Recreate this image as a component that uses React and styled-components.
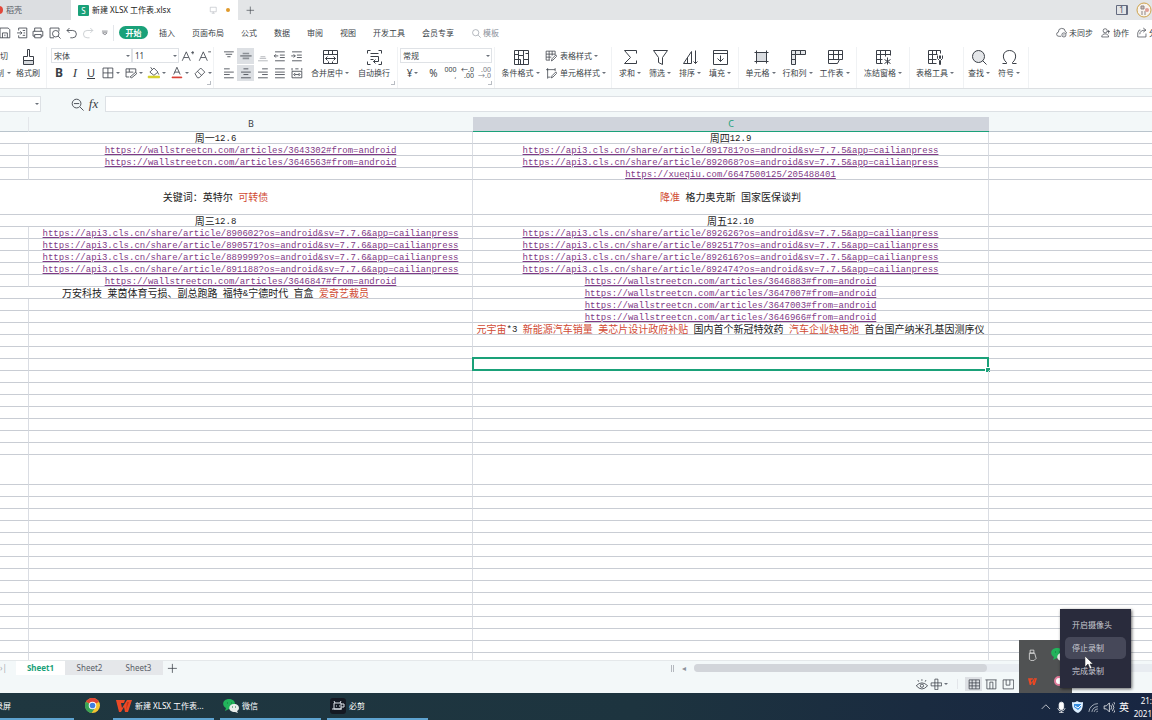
import React from "react";
import styled, { createGlobalStyle, css } from "styled-components";

const c = {
  green: "#1aa179",
  ink: "#3a3f47",
  soft: "#8a909a",
  pale: "#f3f8f9",
  line: "#c9cdd4",
  faint: "#e3e6ea",
  red: "#d04a33",
  link: "#7f3a86",
};

const Global = createGlobalStyle`
  * { box-sizing: border-box; }
  body {
    margin: 0;
    overflow: hidden;
    background: #fff;
    color: ${c.ink};
    font: 8px/12px "Noto Sans", "Noto Sans CJK SC", sans-serif;
  }
  button, input, select { font: inherit; color: inherit; }
  button { border: 0; padding: 0; background: none; white-space: nowrap; }
`;

/* ---------- icons ---------- */

const paths = {
  save: <path d="M2 2h10l2 2v10H2zM5 14V8h6v6M8 10v2" />,
  export: <><path d="M4 5V2h10v12H4v-3M2 8h6M6 6l2 2-2 2" /><path d="M9 5h3M10 8h2M9 11h3" /></>,
  print: <path d="M4 6V2h8v4M4 12H2V6h12v6h-2M4 10h8v4H4z" />,
  preview: <><path d="M13 6V2H2v12h5" /><circle cx="9" cy="9" r="4" /><path d="m12 12 3 3" /></>,
  undo: <path d="M5 2 2 5l3 3M2 5h7a4 4 0 0 1 0 9H6" />,
  redo: <path d="m11 2 3 3-3 3M14 5H7a4 4 0 0 0 0 9h3" />,
  more: <path d="M3 5h10M4 8l4 4 4-4z" />,
  search: <><circle cx="7" cy="7" r="5" /><path d="m11 11 4 4" /></>,
  cloud: <><path d="M7 13H4a3 3 0 0 1-1-6 5 5 0 0 1 10-1 3 3 0 0 1 2 3" /><circle cx="11" cy="11" r="3" /><path d="M10 11h2" /></>,
  person: <><circle cx="7" cy="5" r="3" /><path d="M2 14c0-6 10-6 10 0zM12 4v5M10 6h4" /></>,
  share: <path d="M6 4H4L2 8v6h12V9M5 10c0-4 3-6 8-6M10 1l4 3-4 3" />,
  brush: <><path d="M7 0h2v7h4v4H3V7h4z" /><path d="M3 11h10v4H3z" fill="#d5d8dc" /></>,
  fontUp: <path d="M1 14 6 3l5 11M3 10h6M12 4h4M14 2v4" />,
  fontDown: <path d="M1 14 6 3l5 11M3 10h6M12 3h4" />,
  borders: <path d="M2 2h12v12H2zM8 2v12M2 8h12" />,
  cellStyle: <path d="M2 3h12v4M2 3v10h4M2 7h9M6 3v4M7 13l7-6 1 2-6 5z" />,
  fill: <><path d="m3 7 5-5 5 5-5 4zM6 4 4 1M13 8l1 2" /><path d="M1 12h14v2H1z" fill="#d8d100" stroke="#cfc92a" /></>,
  fontColor: <><path d="M4 10 8 1l4 9M5 7h6" /><path d="M2 13h12v1H2z" fill="#d9362b" stroke="#d9362b" /></>,
  eraser: <path d="m2 9 7-7 5 5-7 7H5zM5 6l5 5" />,
  alignTop: <path d="M2 3h12M4 6h8M6 9h4" />,
  alignMid: <path d="M4 5h8M1 8h14M4 11h8" stroke="#8c9096" strokeWidth="2" />,
  alignBottom: <path d="M5 9h6M4 11h8M2 14h12" stroke="#a6aaaf" />,
  indentLeft: <path d="M2 3h12M8 7h6M8 10h6M2 14h12M6 8H1M3 6 1 8l2 2" />,
  indentRight: <path d="M2 3h12M8 7h6M8 10h6M2 14h12M1 8h5M4 6l2 2-2 2" />,
  left: <path d="M2 3h7M2 7h12M2 10h7M2 14h12" />,
  center: <path d="M5 3h6M2 7h12M5 10h6M2 14h12" />,
  right: <path d="M7 3h7M2 7h12M7 10h7M2 14h12" />,
  justify: <path d="M2 3h12M2 7h12M2 10h12M2 14h12" />,
  distribute: <path d="M2 2v3M14 2v3M6 3h4M2 6h12v8H2zM5 10h6M6 8l-2 2 2 2M10 8l2 2-2 2" />,
  merge: <><path d="M1 1h14v13H1zM1 5h14M6 1v4M10 1v4M6 12v2M10 12v2" /><path d="M3 9h10M5 7 3 9l2 2M11 7l2 2-2 2" /></>,
  wrap: <path d="M4 1H1v3M12 1h3v3M1 12v3h3M15 12v3h-3M4 4h8M4 7h8v5H7M4 10h3M9 10l-2 2 2 2" />,
  condition: <path d="M1 1h14v14H1zM5 1v14M1 5h4M1 10h4M5 6h5V1M10 6v4h5M5 10h2v5M10 10v5M12 4h3" />,
  tableStyle: <path d="M13 6V1H1v12h5M1 5h12M1 9h7M5 1v12M9 1v6M8 14l1-3 5-5 1 2-5 5z" />,
  cellFormat: <path d="M3 1v3M1 3h12M3 3v10h4M13 1v4M3 13v2M8 14l1-3 5-5 1 2-5 5z" />,
  sum: <path d="M14 4V1H2l6 7-6 6h12v-3" />,
  filter: <path d="M1 1h14l-5 7v7l-4-2V8z" />,
  sort: <path d="M1 14 9 2v12zM5 14V8M13 1v13M11 12l2 2 2-2" />,
  fillDown: <path d="M1 1h14v14H1zM1 4h14M8 6v6M5 9l3 3 3-3" />,
  cell: <><path d="M3 3h10v9H3z" fill="#d9dce0" stroke="none" /><path d="M3 1v13M13 1v13M1 3h14M1 12h14" /></>,
  rowcol: <><path d="M1 1h14v4H5v10H1z" fill="#e4e6e9" /><path d="M1 5h4V1M10 1v4M1 10h4" /></>,
  sheet: <path d="M1 1h14v9h-3l-2 4H1V1M1 5h14M6 1v9M11 1v9M1 10h11" />,
  freeze: <path d="M15 6V1H1v13h6M1 5h14M1 10h6M5 1v13M10 1v6M12 8v7M9 10l6 4M15 10l-6 4" />,
  tools: <path d="M13 4V1H1v13h8M1 5h9M1 10h8M5 1v13M9 1v4M10 6v3l2 2v4h1v-4l2-2V6M12 6v3h1V6" />,
  find: <><circle cx="7" cy="7" r="6" fill="#e4e6e9" /><path d="m11 11 4 4" /></>,
  omega: <path d="M1 14h4v-1C0 9 1 1 8 1s8 8 3 12v1h4" />,
  zoomOut: <><circle cx="7" cy="7" r="5" /><path d="m11 11 4 4M4 7h6" /></>,
  monitor: <path d="M2 2h12v9H2zM5 14h6M8 11v3" stroke="#a7abb2" />,
  eye: <><path d="M1 9q7-7 14 0-7 8-14 0zM8 1v2M3 2l1 2M13 2l-1 2" /><circle cx="8" cy="9" r="2" /></>,
  target: <path d="M6 1h4v14H6zM1 6h14v4H1z" />,
  grid: <path d="M1 2h14v12H1zM1 6h14M1 10h14M5 2v12M10 2v12" />,
  page: <path d="M2 2h12v12H2zM2 2H0M14 2h1M6 5v9M6 5h4v9" />,
  split: <path d="M1 2h14v12H1zM5 2v7M10 2v7M5 9h5" />,
  plus: <path d="M8 2v12M2 8h12" />,
  usb: <path d="M5 1h5v4H5zM4 5h7l2 7-3 3H6l-2-2z" stroke="#eee" />,
  up: <path d="m2 11 6-6 6 6" />,
  mic: <><rect x="5" y="1" width="6" height="10" rx="3" fill="#fff" /><path d="M3 9q1 4 5 4t5-4M8 13v2M5 15h6" /></>,
  wifi: <path d="M2 14A12 12 0 0 1 14 3M6 14a8 8 0 0 1 8-7M9 14a5 5 0 0 1 5-4M12 14l2-1" />,
  volume: <path d="M1 6h3l4-4v12l-4-4H1zM10 5q2 3 0 6M12 3q4 5 0 10M14 1q5 7 0 14" />,
};

const Svg = styled.svg`
  display: block;
  flex: none;
  fill: none;
  stroke: ${(p) => p.$color || "currentColor"};
  stroke-width: 1;
`;

/* The half-unit origin keeps whole-number strokes on the pixel grid. */
const Icon = ({ name, size = 12, color }) => (
  <Svg width={size} height={size} viewBox="-0.5 -0.5 16 16" $color={color} aria-hidden="true">
    {paths[name]}
  </Svg>
);

const CaretShape = styled.svg`
  display: block;
  flex: none;
  fill: #6b717a;
`;
const Caret = () => (
  <CaretShape width="4" height="2" viewBox="0 0 4 2" aria-hidden="true">
    <path d="M0 0h4L2 2z" />
  </CaretShape>
);

/* ---------- shell ---------- */

const Shell = styled.div`
  position: relative;
  display: flex;
  flex-direction: column;
  height: 100vh;
  overflow: hidden;
`;

const TitleBar = styled.header`
  display: flex;
  align-items: center;
  flex: none;
  height: 20px;
  background: #e3e5e7;
`;
const DocTab = styled.button`
  display: flex;
  align-items: center;
  gap: 3px;
  height: 20px;
  width: ${(p) => p.$width}px;
  padding: ${(p) => (p.$active ? "0 8px 0 7px" : "0")};
  background: ${(p) => (p.$active ? "#fff" : "#dcdee1")};
  color: ${(p) => (p.$active ? "#222" : "#555a63")};
  overflow: hidden;
`;
const TabTitle = styled.span`
  flex: 1;
  text-align: left;
`;
const HalfLogo = styled.span`
  width: 8px;
  height: 8px;
  margin-left: -5px;
  border-radius: 4px;
  background: #e2473a;
`;
const SheetLogo = styled.span`
  width: 11px;
  height: 11px;
  border-radius: 1px;
  background: ${c.green};
  color: #fff;
  line-height: 11px;
`;
const UnsavedDot = styled.span`
  width: 4px;
  height: 4px;
  margin-left: 6px;
  border-radius: 2px;
  background: #e09a2c;
`;
const IconButton = styled.button`
  display: flex;
  align-items: center;
  justify-content: center;
  gap: 2px;
  width: ${(p) => p.$w || 17}px;
  height: ${(p) => p.$h || 16}px;
  color: ${(p) => p.$color || c.ink};
  background: ${(p) => (p.$on ? "#dde0e4" : "none")};
  ${(p) => p.$large && css`font-size: 10px;`}
  ${(p) => p.$bold && css`font-size: 12px; font-weight: 700;`}
  ${(p) => p.$italic && css`font: italic 13px/16px "Liberation Serif", serif;`}
  ${(p) => p.$underline && css`font-size: 11px; text-decoration: underline;`}
`;
const Spacer = styled.div`
  flex: 1;
`;
const Badge = styled.span`
  width: 12px;
  height: 10px;
  margin-right: 8px;
  border: 1px solid #646b80;
  border-right-width: 2px;
  border-radius: 1px;
  color: #4b5266;
  line-height: 8px;
  text-align: center;
`;

const MenuBar = styled.nav`
  display: flex;
  align-items: center;
  flex: none;
  height: 25px;
  overflow: hidden;
`;
const QuickBar = styled.div`
  display: flex;
  margin-left: -4px;
  width: 118px;
  border-right: 1px solid ${c.faint};
`;
const MenuList = styled.div`
  display: flex;
  align-items: center;
  gap: 17px;
  margin-left: 5px;
`;
const MenuItem = styled.button`
  ${(p) =>
    p.$active &&
    css`
      height: 13px;
      width: 29px;
      margin-right: -6px;
      border-radius: 7px;
      background: ${c.green};
      color: #fff;
      font-weight: 700;
    `}
`;
const MenuAction = styled.button`
  display: flex;
  align-items: center;
  gap: 2px;
  color: ${(p) => (p.$muted ? c.soft : c.ink)};
`;
const MenuRight = styled.div`
  display: flex;
  gap: 7px;
  width: 96px;
  margin-left: auto;
  overflow: hidden;
`;

/* ---------- ribbon ---------- */

const Ribbon = styled.section`
  display: flex;
  flex: none;
  height: 44px;
  padding-top: 2px;
  border-bottom: 1px solid #dcdfe2;
  overflow: hidden;
`;
const Group = styled.div`
  position: relative;
  display: flex;
  flex: none;
  justify-content: ${(p) => p.$justify || "flex-start"};
  width: ${(p) => p.$width}px;
  padding-left: ${(p) => p.$pad || 0}px;
  border-right: 1px solid #f0f2f4;
  ${(p) =>
    p.$launcher &&
    css`
      &::after {
        content: "";
        position: absolute;
        right: 2px;
        bottom: 3px;
        width: 3px;
        height: 3px;
        border: solid #b9bdc3;
        border-width: 0 1px 1px 0;
      }
    `}
`;
const Stack = styled.div`
  display: flex;
  flex-direction: column;
  align-items: ${(p) => p.$align || "flex-start"};
  ${(p) => p.$clip && css`width: 11px;`}
`;
const Line = styled.div`
  display: flex;
  align-items: center;
  height: 17px;
`;
const Big = styled.button`
  display: flex;
  flex-direction: column;
  align-items: center;
  gap: 2px;
  width: ${(p) => p.$width}px;
  height: 34px;
  padding-top: 2px;
`;
const Small = styled.button`
  display: flex;
  align-items: center;
  gap: 3px;
  height: 17px;
`;
const Label = styled.span`
  display: flex;
  align-items: center;
  gap: 2px;
`;
const SelectBox = styled.span`
  position: relative;
  display: block;
  width: ${(p) => p.$width}px;
  svg {
    position: absolute;
    right: 2px;
    top: 7px;
    pointer-events: none;
  }
`;
const Select = styled.select`
  display: block;
  width: 100%;
  height: 15px;
  padding: 0 2px;
  appearance: none;
  border: 1px solid #dfe2e6;
  border-radius: 0;
  background: #fff;
`;

const BigButton = ({ icon, label, width, menu = true }) => (
  <Big $width={width}>
    <Icon name={icon} size={16} />
    <Label>
      {label}
      {menu && <Caret />}
    </Label>
  </Big>
);
const Picker = ({ label, value, width }) => (
  <SelectBox $width={width}>
    <Select aria-label={label} defaultValue={value}>
      <option>{value}</option>
    </Select>
    <Caret />
  </SelectBox>
);

const Digits = styled.span`
  font-size: 7px;
  line-height: 6px;
  white-space: pre-line;
  text-align: right;
`;

/* ---------- formula bar ---------- */

const FormulaBar = styled.section`
  display: flex;
  align-items: flex-start;
  flex: none;
  height: 28px;
  padding-top: 7px;
  background: ${c.pale};
`;
const NameBox = styled.span`
  position: relative;
  width: 41px;
  svg {
    position: absolute;
    right: 2px;
    top: 7px;
  }
`;
const Field = styled.input`
  display: block;
  width: 100%;
  height: 16px;
  border: 1px solid #dde1e5;
  border-left: 0;
  background: #fff;
`;
const FormulaTools = styled.div`
  display: flex;
  width: 64px;
  padding-left: 27px;
`;
const FormulaField = styled(Field)`
  flex: 1;
  width: auto;
  border-left: 1px solid #dde1e5;
  border-right: 0;
`;

/* ---------- grid ---------- */

const GridArea = styled.main`
  flex: 1;
  min-height: 0;
  margin-left: -41px;
  overflow: hidden;
`;
const Table = styled.table`
  width: 100%;
  table-layout: fixed;
  border-collapse: separate;
  border-spacing: 0;
`;
const Col = styled.col`
  width: ${(p) => (p.$width ? `${p.$width}px` : "auto")};
`;
const Head = styled.th`
  height: 15px;
  padding: 0;
  border-bottom: 1px solid ${(p) => (p.$on ? c.green : "#b9c4cc")};
  border-right: ${(p) => (p.$edge ? `1px solid ${c.faint}` : "0")};
  background: ${(p) => (p.$on ? "#d0d4dc" : c.pale)};
  color: ${(p) => (p.$on ? c.green : c.ink)};
  font-size: 9px;
  font-weight: 400;
  line-height: 14px;
`;
const Cell = styled.td`
  position: relative;
  height: ${(p) => p.$height}px;
  padding: 0;
  border-bottom: 1px solid ${c.line};
  border-right: ${(p) => (p.$last ? 0 : 1)}px solid #dadde3;
  ${(p) =>
    p.$selected &&
    css`
      &::before {
        content: "";
        position: absolute;
        inset: -2px -1px -1px -1px;
        border: 2px solid ${c.green};
      }
      &::after {
        content: "";
        position: absolute;
        right: -2px;
        bottom: -2px;
        width: 4px;
        height: 4px;
        border: solid #fff;
        border-width: 1px 0 0 1px;
        background: ${c.green};
      }
    `}
`;
const CellText = styled.div`
  display: flex;
  align-items: center;
  justify-content: center;
  height: 11px;
  padding-top: 3px;
  color: #1c1c1c;
  font: 9px/11px "Liberation Mono", "Noto Sans CJK SC", monospace;
  white-space: pre;
`;
const Run = styled.span`
  font-size: ${(p) => (p.$cjk ? 10 : 9)}px;
  color: ${(p) => (p.$red ? c.red : "inherit")};
`;
const CellLink = styled.a`
  color: ${c.link};
  text-decoration: underline;
  text-underline-offset: 1px;
`;

const api = (id, v) => `https://api3.cls.cn/share/article/${id}?os=android&sv=7.7.${v}&app=cailianpress`;
const wall = (id) => `https://wallstreetcn.com/articles/${id}#from=android`;

/* Text between square brackets is shown in red. */
const rows = [
  { b: "周一12.6", c: "周四12.9", merged: true },
  { b: wall(3643302), c: api(891781, 5) },
  { b: wall(3646563), c: api(892068, 5) },
  { c: "https://xueqiu.com/6647500125/205488401" },
  { b: "关键词：英特尔 [可转债]", c: "[降准] 格力奥克斯 国家医保谈判", merged: true, h: 35 },
  { b: "周三12.8", c: "周五12.10", merged: true },
  { b: api(890602, 6), c: api(892626, 5) },
  { b: api(890571, 6), c: api(892517, 5) },
  { b: api(889999, 6), c: api(892616, 5) },
  { b: api(891188, 6), c: api(892474, 5) },
  { b: wall(3646847), c: wall(3646883) },
  { b: "万安科技 莱茵体育亏损、副总跑路 福特&宁德时代 盲盒 [爱奇艺裁员]", c: wall(3647007), merged: true },
  { c: wall(3647003) },
  { c: wall(3646966) },
  { c: "[元宇宙]*3 [新能源汽车销量] [美芯片设计政府补贴] 国内首个新冠特效药 [汽车企业缺电池] 首台国产纳米孔基因测序仪" },
  {},
  {},
  {},
  {}, {}, {}, {}, {}, {}, {},
  { h: 30 },
  ...Array.from({ length: 15 }, () => ({})),
];
const selectedRow = 17;

const Content = ({ value }) => {
  if (!value) return null;
  if (value.startsWith("https"))
    return (
      <CellText>
        <CellLink href={value}>{value}</CellLink>
      </CellText>
    );
  let red = false;
  const parts = value.match(/\[|\]|[\u3000-\u9fff\uff00-\uffef]+|[^[\]\u3000-\u9fff\uff00-\uffef]+/g);
  return (
    <CellText>
      {parts.map((t, i) => {
        if (t === "[" || t === "]") {
          red = t === "[";
          return null;
        }
        return (
          <Run key={i} $red={red} $cjk={/[\u3000-\uffef]/.test(t)}>
            {t}
          </Run>
        );
      })}
    </CellText>
  );
};

/* ---------- bottom bars ---------- */

const SheetBar = styled.footer`
  display: flex;
  align-items: center;
  flex: none;
  height: 15px;
  border-top: 1px solid #e4e8ea;
  background: ${c.pale};
`;
const SheetNav = styled.span`
  width: 16px;
  color: #a4a9b0;
`;
const SheetTab = styled.button`
  width: 49px;
  height: 14px;
  background: ${(p) => (p.$active ? "#fff" : "#e5e7ea")};
  color: ${(p) => (p.$active ? c.green : "#5a6068")};
  font-weight: ${(p) => (p.$active ? 700 : 400)};
`;
const ScrollArea = styled.div`
  display: flex;
  align-items: center;
  gap: 7px;
  width: 481px;
  margin-left: auto;
  color: #8d929a;
`;
const Grip = styled.span`
  width: 3px;
  height: 7px;
  border: solid #b4b8be;
  border-width: 0 1px;
`;
const ScrollLeft = styled.button`
  width: 6px;
`;
const Track = styled.div`
  flex: 1;
  height: 8px;
  border-radius: 4px 0 0 4px;
  background: #e8ecf1;
`;
const Thumb = styled.div`
  width: 64%;
  height: 8px;
  border-radius: 4px;
  background: #d2d5da;
`;
const StatusBar = styled.footer`
  display: flex;
  align-items: center;
  justify-content: flex-end;
  flex: none;
  height: 18px;
  padding-right: 136px;
  background: ${c.pale};
`;
const Divider = styled.span`
  width: 1px;
  height: 10px;
  margin: 0 7px 0 8px;
  background: ${c.faint};
`;

const Taskbar = styled.footer`
  display: flex;
  flex: none;
  height: 27px;
  overflow: hidden;
  background: linear-gradient(90deg, #1f3740 0%, #1d343f 55%, #1a2b40 80%, #182642 100%);
  color: #fff;
`;
const Tasks = styled.div`
  display: flex;
  gap: 6px;
  margin-left: -27px;
`;
const Task = styled.button`
  display: flex;
  align-items: center;
  gap: 3px;
  width: ${(p) => (p.$slim ? 27 : 101)}px;
  padding-left: ${(p) => (p.$slim ? 5 : 3)}px;
  border-bottom: 2px solid ${(p) => (p.$slim ? "transparent" : "#5ea3d0")};
`;
const Tray = styled.div`
  display: flex;
  align-items: center;
  width: 115px;
  margin-left: auto;
`;
const Clock = styled.time`
  display: flex;
  flex-direction: column;
  align-items: flex-end;
  width: 20px;
  margin-left: 1px;
  line-height: 13px;
`;

const TrayPanel = styled.div`
  position: absolute;
  right: 80px;
  bottom: 27px;
  display: grid;
  grid-template-columns: 1fr 1fr;
  place-items: center;
  width: 53px;
  height: 53px;
  background: #505253;
`;
const RecordMenu = styled.div`
  position: absolute;
  right: 21px;
  bottom: 32px;
  display: flex;
  flex-direction: column;
  width: 71px;
  padding: 5px 5px 6px;
  background: #292b3c;
  box-shadow: 1px 1px 3px rgba(0, 0, 0, 0.6);
`;
const RecordItem = styled.button`
  height: 22px;
  padding-left: 7px;
  border-radius: 5px;
  background: ${(p) => (p.$hover ? "#464859" : "none")};
  color: #c9cad2;
  text-align: left;
  & + & {
    margin-top: 1px;
  }
`;
const Cursor = styled.svg`
  position: absolute;
  right: 59px;
  bottom: 51px;
`;

const Chrome = () => (
  <svg width="15" height="15" viewBox="0 0 16 16" aria-hidden="true">
    <circle cx="8" cy="8" r="8" fill="#f4c32f" />
    <path d="M8 8 1 4a8 8 0 0 1 14 0z" fill="#df4535" />
    <path d="M8 8 1 4a8 8 0 0 0 6 12l4-6z" fill="#3aa457" />
    <circle cx="8" cy="8" r="4" fill="#fff" />
    <circle cx="8" cy="8" r="3" fill="#3f7ee0" />
  </svg>
);
const Wps = ({ size = 16 }) => (
  <svg width={size} height={size} viewBox="0 0 16 16" aria-hidden="true">
    <path d="M0 2h9l-1 3H5l1 5 5-8h5l-4 12H9l-1-5-3 5H3z" fill="#ea4a27" />
    <path d="m11 4-1 8 3-8" fill="#c93415" />
  </svg>
);
const WeChat = () => (
  <svg width="16" height="16" viewBox="0 0 16 16" aria-hidden="true">
    <path d="M6 1c8 0 8 10 0 10l-4 2 1-3C-2 7 0 1 6 1z" fill="#22b35b" />
    <path d="M11 6c6 0 6 6 3 7l1 2-3-1C4 14 5 6 11 6z" fill="#e9edeb" />
    <path d="M4 5h1M8 5h1M9 9h1M12 9h1" stroke="#1b6d40" />
  </svg>
);
const Bcut = () => (
  <svg width="16" height="16" viewBox="0 0 16 16" aria-hidden="true">
    <rect width="16" height="16" rx="3" fill="#151923" />
    <path d="M4 5h7v6H4zM5 5 4 3M10 5l1-2M6 8h1M9 8h1M2 11h10M11 6h3v3h-3" fill="none" stroke="#dfe3ea" />
  </svg>
);
const Shield = () => (
  <svg width="11" height="12" viewBox="0 0 11 12" aria-hidden="true">
    <path d="M5 0q3 2 6 1c0 6-1 9-5 11C1 10 0 7 0 1q3 1 5-1z" fill="#dbeeff" />
    <path d="M2 3h7v3L6 9 2 6z" fill="#368de0" />
    <path d="m3 5 3 2 3-3" fill="none" stroke="#fff" />
  </svg>
);
const Avatar = () => (
  <svg width="16" height="16" viewBox="0 0 16 16" aria-hidden="true">
    <circle cx="8" cy="8" r="7" fill="#f8f3ee" stroke="#cda24a" />
    <path d="M5 4h3v3H5zM6 9v4M9 9v4" stroke="#8d8584" fill="#c9bdb8" />
    <circle cx="11" cy="8" r="2" fill="#e0a097" />
  </svg>
);

const quick = ["save", "export", "print", "preview", "undo", "redo", "more"];
const menus = ["插入", "页面布局", "公式", "数据", "审阅", "视图", "开发工具", "会员专享"];
const verticals = ["alignTop", "alignMid", "alignBottom", "indentLeft", "indentRight"];
const horizontals = ["left", "center", "right", "justify", "distribute"];

export default function App() {
  return (
    <Shell>
      <Global />
      <TitleBar>
        <DocTab $width={71}>
          <HalfLogo />
          <TabTitle>稻壳</TabTitle>
        </DocTab>
        <DocTab $active $width={167}>
          <SheetLogo>S</SheetLogo>
          <TabTitle>新建 XLSX 工作表.xlsx</TabTitle>
          <Icon name="monitor" size={8} />
          <UnsavedDot />
        </DocTab>
        <IconButton $w={24} aria-label="新建">
          <Icon name="plus" size={10} />
        </IconButton>
        <Spacer />
        <Badge>1</Badge>
        <Avatar />
      </TitleBar>

      <MenuBar>
        <QuickBar>
          {quick.map((n) => (
            <IconButton key={n} aria-label={n} $color={n === "redo" ? "#c3c6ca" : undefined}>
              <Icon name={n} size={n === "more" ? 9 : 13} />
            </IconButton>
          ))}
        </QuickBar>
        <MenuList>
          <MenuItem $active>开始</MenuItem>
          {menus.map((m) => (
            <MenuItem key={m}>{m}</MenuItem>
          ))}
          <MenuAction $muted>
            <Icon name="search" size={10} />
            模板
          </MenuAction>
        </MenuList>
        <MenuRight>
          <MenuAction><Icon name="cloud" size={11} />未同步</MenuAction>
          <MenuAction><Icon name="person" size={11} />协作</MenuAction>
          <MenuAction><Icon name="share" size={11} />分享</MenuAction>
        </MenuRight>
      </MenuBar>

      <Ribbon>
        <Group $width={47}>
          <Stack $clip $align="flex-end">
            <Small>剪切<Label /></Small>
            <Small>复制<Caret /></Small>
          </Stack>
          <BigButton icon="brush" label="格式刷" width={34} menu={false} />
        </Group>

        <Group $width={167} $pad={4} $launcher>
          <Stack>
            <Line>
              <Picker label="字体" value="宋体" width={81} />
              <Picker label="字号" value="11" width={47} />
              <IconButton aria-label="增大字号"><Icon name="fontUp" size={13} /></IconButton>
              <IconButton aria-label="减小字号"><Icon name="fontDown" size={13} /></IconButton>
            </Line>
            <Line>
              <IconButton $w={16} $bold>B</IconButton>
              <IconButton $w={16} $italic>I</IconButton>
              <IconButton $w={16} $underline>U</IconButton>
              {["borders", "cellStyle", "fill", "fontColor", "eraser"].map((n) => (
                <IconButton key={n} $w={23} aria-label={n}>
                  <Icon name={n} size={13} />
                  <Caret />
                </IconButton>
              ))}
            </Line>
          </Stack>
        </Group>

        <Group $width={184} $pad={6} $launcher>
          <Stack>
            <Line>
              {verticals.map((n) => (
                <IconButton key={n} aria-label={n} $on={n === "alignMid"}><Icon name={n} size={13} /></IconButton>
              ))}
            </Line>
            <Line>
              {horizontals.map((n) => (
                <IconButton key={n} aria-label={n} $on={n === "center"}><Icon name={n} size={13} /></IconButton>
              ))}
            </Line>
          </Stack>
          <BigButton icon="merge" label="合并居中" width={50} />
          <BigButton icon="wrap" label="自动换行" width={38} menu={false} />
        </Group>

        <Group $width={97} $pad={2} $launcher>
          <Stack>
            <Line><Picker label="数字格式" value="常规" width={92} /></Line>
            <Line>
              <IconButton $w={25} $large><Label>¥</Label><Caret /></IconButton>
              <IconButton $large>%</IconButton>
              <IconButton><Digits>{"000\n,"}</Digits></IconButton>
              <IconButton><Digits>{"←.0\n.00"}</Digits></IconButton>
              <IconButton $color="#777c84"><Digits>{".00\n→.0"}</Digits></IconButton>
            </Line>
          </Stack>
        </Group>

        <Group $width={117} $pad={1}>
          <BigButton icon="condition" label="条件格式" width={49} />
          <Stack>
            <Small><Icon name="tableStyle" /><Label>表格样式<Caret /></Label></Small>
            <Small><Icon name="cellFormat" /><Label>单元格样式<Caret /></Label></Small>
          </Stack>
        </Group>

        <Group $width={127} $pad={3}>
          <BigButton icon="sum" label="求和" width={30} />
          <BigButton icon="filter" label="筛选" width={30} />
          <BigButton icon="sort" label="排序" width={30} />
          <BigButton icon="fillDown" label="填充" width={30} />
        </Group>

        <Group $width={118} $pad={3}>
          <BigButton icon="cell" label="单元格" width={37} />
          <BigButton icon="rowcol" label="行和列" width={37} />
          <BigButton icon="sheet" label="工作表" width={37} />
        </Group>
        <Group $width={53} $justify="center">
          <BigButton icon="freeze" label="冻结窗格" width={50} />
        </Group>
        <Group $width={54}>
          <BigButton icon="tools" label="表格工具" width={50} />
        </Group>
        <Group $width={65}>
          <BigButton icon="find" label="查找" width={30} />
          <BigButton icon="omega" label="符号" width={30} />
        </Group>
      </Ribbon>

      <FormulaBar>
        <NameBox>
          <Field aria-label="名称框" />
          <Caret />
        </NameBox>
        <FormulaTools>
          <IconButton aria-label="缩小"><Icon name="zoomOut" size={14} /></IconButton>
          <IconButton $italic>fx</IconButton>
        </FormulaTools>
        <FormulaField aria-label="编辑栏" />
      </FormulaBar>

      <GridArea>
        <Table>
          <colgroup>
            <Col $width={70} />
            <Col $width={444} />
            <Col $width={516} />
            <Col />
          </colgroup>
          <thead>
            <tr>
              <Head $edge />
              <Head>B</Head>
              <Head $on>C</Head>
              <Head />
            </tr>
          </thead>
          <tbody>
            {rows.map((r, i) => (
              <tr key={i}>
                {!r.merged && <Cell $height={r.h || 12} />}
                <Cell $height={r.h || 12} colSpan={r.merged ? 2 : 1}><Content value={r.b} /></Cell>
                <Cell $selected={i === selectedRow}><Content value={r.c} /></Cell>
                <Cell $last />
              </tr>
            ))}
          </tbody>
        </Table>
      </GridArea>

      <SheetBar>
        <SheetNav>›|</SheetNav>
        <SheetTab $active>Sheet1</SheetTab>
        <SheetTab>Sheet2</SheetTab>
        <SheetTab>Sheet3</SheetTab>
        <IconButton $h={14} aria-label="新建工作表"><Icon name="plus" size={12} /></IconButton>
        <ScrollArea>
          <Grip />
          <ScrollLeft>◂</ScrollLeft>
          <Track><Thumb /></Track>
        </ScrollArea>
      </SheetBar>
      <StatusBar>
        <IconButton $w={15} aria-label="护眼模式"><Icon name="eye" size={13} /></IconButton>
        <IconButton $w={20} aria-label="阅读模式"><Icon name="target" size={12} /><Caret /></IconButton>
        <Divider />
        <IconButton $on $h={14} aria-label="普通视图"><Icon name="grid" /></IconButton>
        <IconButton aria-label="页面布局"><Icon name="page" /></IconButton>
        <IconButton aria-label="分页预览"><Icon name="split" /></IconButton>
      </StatusBar>

      <Taskbar>
        <Tasks>
          <Task><Wps />录屏</Task>
          <Task $slim aria-label="Chrome"><Chrome /></Task>
          <Task><Wps />新建 XLSX 工作表...</Task>
          <Task><WeChat />微信</Task>
          <Task><Bcut />必剪</Task>
        </Tasks>
        <Tray>
          <IconButton $w={16} $color="#fff" aria-label="展开"><Icon name="up" size={11} /></IconButton>
          <IconButton $w={16} $color="#fff" aria-label="麦克风"><Icon name="mic" /></IconButton>
          <IconButton $w={16} aria-label="安全"><Shield /></IconButton>
          <IconButton $w={16} $color="#cfd5dd" aria-label="网络"><Icon name="wifi" /></IconButton>
          <IconButton $w={16} $color="#fff" aria-label="音量"><Icon name="volume" /></IconButton>
          <IconButton $w={14} $color="#fff" $large>英</IconButton>
          <Clock>
            <span>21:</span>
            <span>2021</span>
          </Clock>
        </Tray>
      </Taskbar>

      <TrayPanel>
        <Icon name="usb" />
        <WeChat />
        <Wps size={9} />
        <svg width="10" height="10" viewBox="0 0 10 10" aria-hidden="true">
          <circle cx="5" cy="5" r="4" fill="#fff" stroke="#e07b9a" strokeWidth="2" />
        </svg>
      </TrayPanel>
      <RecordMenu>
        <RecordItem>开启摄像头</RecordItem>
        <RecordItem $hover>停止录制</RecordItem>
        <RecordItem>完成录制</RecordItem>
      </RecordMenu>
      <Cursor width="8" height="13" viewBox="0 0 8 13" aria-hidden="true">
        <path d="M0 0v11l3-3 2 5 2-1-2-4h3z" fill="#fff" stroke="#222" strokeWidth=".5" />
      </Cursor>
    </Shell>
  );
}
